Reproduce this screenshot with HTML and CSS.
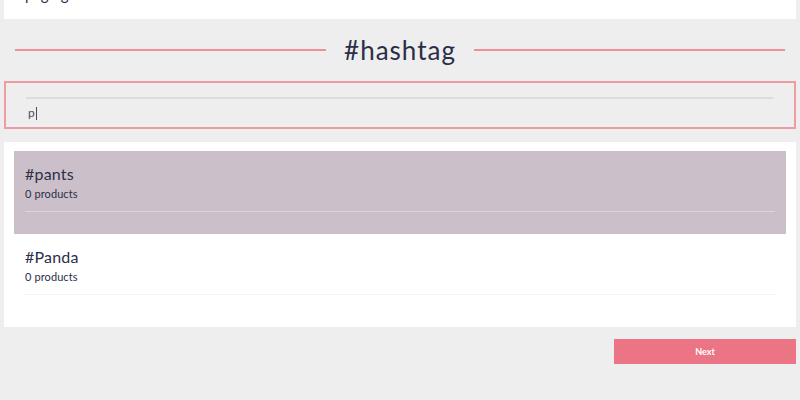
FILE: index.html
```html
<!DOCTYPE html>
<html>
<head>
<meta charset="utf-8">
<link rel="stylesheet" href="styles.css">
</head>
<body>
<div class="page">
  <div class="top-card"><span class="top-text">paging</span></div>
  <div class="heading">
    <span class="heading-line"></span>
    <h1 class="heading-title">#hashtag</h1>
    <span class="heading-line"></span>
  </div>
  <div class="search">
    <div class="search-rule"></div>
    <div class="search-input">p<span class="caret"></span></div>
  </div>
  <div class="results">
    <div class="result result-active">
      <div class="result-title">#pants</div>
      <div class="result-count">0 products</div>
      <div class="result-sep"></div>
    </div>
    <div class="result">
      <div class="result-title">#Panda</div>
      <div class="result-count">0 products</div>
      <div class="result-sep"></div>
    </div>
  </div>
  <div class="actions">
    <button class="next-btn">Next</button>
  </div>
</div>
</body>
</html>
```

FILE: styles.css
```css
* { box-sizing: border-box; }
html, body {
  margin: 0;
  padding: 0;
  background: #eeeeee;
  font-family: Lato, "Noto Sans", sans-serif;
  color: #2b2e48;
}
.page {
  padding: 0 4px;
  height: 400px;
  overflow: hidden;
}
.top-card {
  background: #ffffff;
  height: 19px;
  overflow: hidden;
  padding-left: 21px;
}
.top-text {
  display: block;
  font-size: 15px;
  line-height: 15px;
  margin-top: -13px;
  color: #2b2e48;
}
.heading {
  display: flex;
  align-items: center;
  padding: 0 11px;
  height: 62px;
}
.heading-line {
  flex: 1;
  height: 2px;
  background: #ee8f99;
}
.heading-title {
  margin: 0 18px;
  font-weight: 400;
  font-size: 26px;
  line-height: 30px;
  letter-spacing: 1px;
  color: #2b2e48;
}
.search {
  border: 2px solid #ef9ba4;
  height: 48px;
  padding: 14px 21px 0 20px;
}
.search-rule {
  height: 2px;
  background: #dcdcdc;
}
.search-input {
  margin-top: 6px;
  padding-left: 2px;
  font-size: 12px;
  line-height: 16px;
  color: #4a4d5e;
  display: flex;
  align-items: center;
}
.caret {
  display: inline-block;
  width: 1px;
  height: 13px;
  background: #4a4d5e;
  margin-left: 1px;
}
.results {
  margin-top: 13px;
  background: #ffffff;
  padding: 9px 10px 10px;
}
.result {
  padding: 13px 11px 0;
  height: 83px;
}
.result-active {
  background: #cbc0c9;
}
.result-title {
  font-size: 16px;
  line-height: 20px;
  letter-spacing: 0.2px;
}
.result-count {
  font-size: 11px;
  line-height: 14px;
  margin-top: 3px;
  letter-spacing: 0.1px;
}
.result-sep {
  margin-top: 10px;
  height: 1px;
  background: #f4f4f4;
}
.result-active .result-sep {
  background: #dcd4db;
}
.actions {
  display: flex;
  justify-content: flex-end;
  margin-top: 12px;
}
.next-btn {
  width: 182px;
  height: 25px;
  border: none;
  background: #ec7585;
  color: #ffffff;
  font-family: Lato, "Noto Sans", sans-serif;
  font-size: 9px;
  font-weight: 700;
  padding: 0;
}
```
